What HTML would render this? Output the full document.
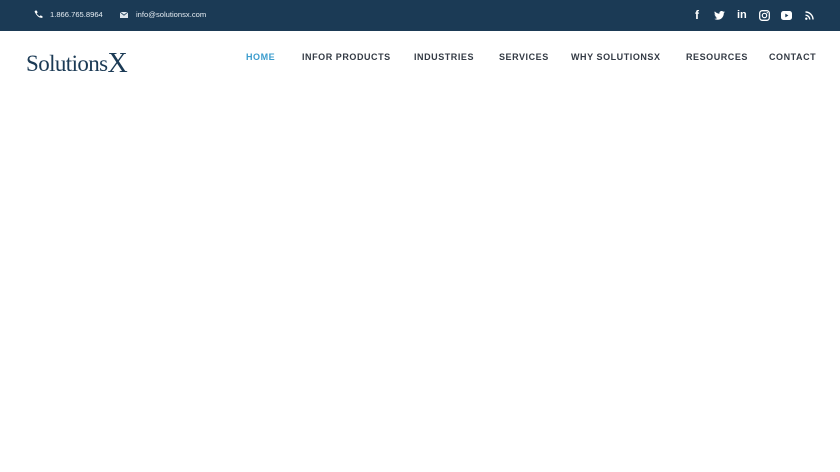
<!DOCTYPE html>
<html><head><meta charset="utf-8"><style>
*{margin:0;padding:0;box-sizing:border-box}
body{width:840px;height:472px;background:#fff;font-family:"Liberation Sans",sans-serif;position:relative;overflow:hidden}
.top{position:absolute;left:0;top:0;width:840px;height:31px;background:#1b3a55}
.t{position:absolute;color:#e6edf3;font-size:7.6px;top:10px}
.nav{position:absolute;top:52px;font-size:9px;font-weight:bold;letter-spacing:0.55px;color:#333a44;white-space:nowrap}
.logo{position:absolute;left:26px;top:47px;font-family:"Liberation Serif",serif;font-size:23px;color:#1b3a55;letter-spacing:-0.6px;white-space:nowrap}
svg{position:absolute}
</style></head><body>
<div class="top"></div>
<svg style="left:34px;top:10px" width="9" height="9" viewBox="0 0 8 8"><path d="M1 0.5 L2.6 0.5 L3.2 2.3 L2.3 3 Q3.2 4.8 5 5.7 L5.7 4.8 L7.5 5.4 L7.5 7 Q3.5 7.5 0.5 1.5Z" fill="#fff"/></svg>
<div class="t" style="left:50px">1.866.765.8964</div>
<svg style="left:120px;top:12px" width="8" height="6" viewBox="0 0 8 6"><rect width="8" height="6" fill="#dfe6ec"/><path d="M0 0 L4 3.2 L8 0" stroke="#1b3a55" stroke-width="0.8" fill="none"/></svg>
<div class="t" style="left:136px">info@solutionsx.com</div>
<div class="t" style="left:695px;top:8px;font-size:12px;font-weight:bold;color:#fff">f</div>
<svg style="left:714px;top:11px" width="11" height="9" viewBox="0 0 24 20"><path d="M24 2.4a10 10 0 0 1-2.8.8A5 5 0 0 0 23.3.4a10 10 0 0 1-3.1 1.2A4.9 4.9 0 0 0 11.8 6 14 14 0 0 1 1.7.9a4.9 4.9 0 0 0 1.5 6.6 5 5 0 0 1-2.2-.6 4.9 4.9 0 0 0 3.9 4.9 5 5 0 0 1-2.2.1 4.9 4.9 0 0 0 4.6 3.4A9.9 9.9 0 0 1 0 17.3 14 14 0 0 0 7.5 19.5c9 0 14-7.5 14-14v-.6A10 10 0 0 0 24 2.4z" fill="#fff"/></svg>
<div class="t" style="left:737px;top:9px;font-size:11px;font-weight:bold;color:#fff">in</div>
<svg style="left:759px;top:10px" width="11" height="11" viewBox="0 0 11 11"><rect x="0.7" y="0.7" width="9.6" height="9.6" rx="2.5" stroke="#fff" stroke-width="1.3" fill="none"/><circle cx="5.5" cy="5.5" r="2.2" stroke="#fff" stroke-width="1.2" fill="none"/><circle cx="8.3" cy="2.7" r="0.7" fill="#fff"/></svg>
<svg style="left:781px;top:11px" width="11" height="9" viewBox="0 0 11 9"><rect width="11" height="9" rx="2.5" fill="#fff"/><path d="M4.3 2.6 L7.4 4.5 L4.3 6.4Z" fill="#1b3a55"/></svg>
<svg style="left:805px;top:11px" width="9" height="9" viewBox="0 0 9 9"><circle cx="1.3" cy="7.7" r="1.2" fill="#fff"/><path d="M0.5 4.2 A4.3 4.3 0 0 1 4.8 8.5 M0.5 1 A7.5 7.5 0 0 1 8 8.5" stroke="#fff" stroke-width="1.4" fill="none"/></svg>
<div class="logo">Solutions<span style="font-size:28px;position:relative;top:1px;letter-spacing:0">X</span></div>
<div class="nav" style="left:246px;color:#3b9ccd">HOME</div>
<div class="nav" style="left:302px">INFOR PRODUCTS</div>
<div class="nav" style="left:414px">INDUSTRIES</div>
<div class="nav" style="left:499px">SERVICES</div>
<div class="nav" style="left:571px">WHY SOLUTIONSX</div>
<div class="nav" style="left:686px">RESOURCES</div>
<div class="nav" style="left:769px">CONTACT</div>
</body></html>
